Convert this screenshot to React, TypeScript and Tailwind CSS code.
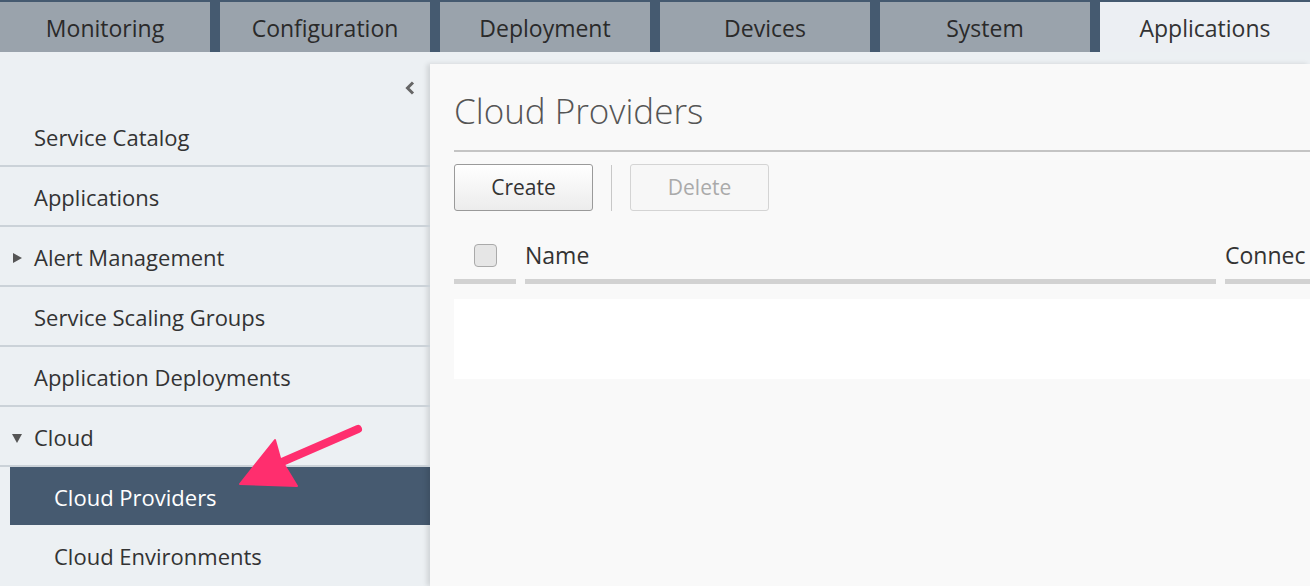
const tabs = ["Monitoring", "Configuration", "Deployment", "Devices", "System", "Applications"];

function NavRow({ label, caret, sub, active }: { label: string; caret?: "right" | "down"; sub?: boolean; active?: boolean }) {
  if (active) {
    return (
      <div className="ml-[10px] flex h-[58px] items-center bg-[#465a70] pl-[44px] pt-[2px] text-[22px] text-white">
        {label}
      </div>
    );
  }
  return (
    <div
      className={`relative flex h-[60px] items-center pt-[3px] text-[22px] text-[#333] ${
        sub ? "pl-[54px]" : "border-b-2 border-[#cbd2d8] pl-[34px]"
      }`}
    >
      {caret === "right" && (
        <span className="absolute left-[13px] top-[26px] h-0 w-0 border-y-[5px] border-l-[9px] border-y-transparent border-l-[#555]" />
      )}
      {caret === "down" && (
        <span className="absolute left-[12px] top-[27px] h-0 w-0 border-x-[5px] border-t-[9px] border-x-transparent border-t-[#555]" />
      )}
      {label}
    </div>
  );
}

export default function App() {
  return (
    <div
      className="relative flex h-[586px] w-[1310px] flex-col overflow-hidden bg-[#ecf0f3]"
      style={{ fontFamily: '"Open Sans", "Noto Sans", sans-serif' }}
    >
      <div className="flex h-[52px] gap-[10px] bg-[#455a70] pt-[2px]">
        {tabs.map((t, i) => (
          <div
            key={t}
            className={`flex h-[50px] items-center justify-center pt-[2px] text-[23px] ${
              i === tabs.length - 1 ? "flex-1 bg-[#eceff3] text-[#333]" : "w-[210px] bg-[#9aa3ac] text-[#2a2a2a]"
            }`}
          >
            {t}
          </div>
        ))}
      </div>

      <div className="flex flex-1">
        <aside className="w-[430px] shrink-0">
          <div className="flex h-[55px] items-end justify-end pb-[12px] pr-[15px]">
            <svg width="10" height="14" viewBox="0 0 10 14">
              <path d="M8 1.5 L2.5 7 L8 12.5" fill="none" stroke="#666" strokeWidth="3" />
            </svg>
          </div>
          <NavRow label="Service Catalog" />
          <NavRow label="Applications" />
          <NavRow label="Alert Management" caret="right" />
          <NavRow label="Service Scaling Groups" />
          <NavRow label="Application Deployments" />
          <NavRow label="Cloud" caret="down" />
          <NavRow label="Cloud Providers" active />
          <NavRow label="Cloud Environments" sub />
        </aside>

        <main className="mt-[12px] min-w-0 flex-1 bg-[#f9f9f9] pl-[24px] shadow-[-3px_0_5px_rgba(0,0,0,0.12)]">
          <div className="border-b-2 border-[#c4c4c4] pb-[16px] pt-[24px] text-[35px] font-light leading-[46px] text-[#555]">
            Cloud Providers
          </div>
          <div className="flex items-center pt-[12px]">
            <button className="h-[47px] w-[139px] rounded-[3px] border border-[#9a9a9a] bg-gradient-to-b from-white to-[#ececec] text-[21px] text-[#333]">
              Create
            </button>
            <div className="mx-[18px] h-[46px] w-px bg-[#c8c8c8]" />
            <button className="h-[47px] w-[139px] rounded-[3px] border border-[#d4d4d4] bg-[#f7f7f7] text-[21px] text-[#aaa]">
              Delete
            </button>
          </div>
          <div className="mt-[20px] flex h-[53px] items-end">
            <div className="flex h-full w-[62px] items-center justify-center border-b-[5px] border-[#d2d2d2]">
              <span className="h-[23px] w-[23px] rounded-[4px] border border-[#aaa] bg-[#e6e6e6]" />
            </div>
            <div className="ml-[9px] flex h-full w-[691px] items-center border-b-[5px] border-[#d2d2d2] text-[23px] text-[#333]">
              Name
            </div>
            <div className="ml-[9px] flex h-full min-w-0 flex-1 items-center overflow-hidden whitespace-nowrap border-b-[5px] border-[#d2d2d2] text-[23px] text-[#333]">
              Connec
            </div>
          </div>
          <div className="mt-[15px] h-[80px] bg-white" />
        </main>
      </div>

      <svg className="pointer-events-none absolute left-0 top-0" width="1310" height="586">
        <line x1="358" y1="429" x2="282" y2="462" stroke="#ff2e6e" strokeWidth="8" strokeLinecap="round" />
        <polygon points="240,484 275,440 280,458 297,486" fill="#ff2e6e" strokeLinejoin="round" stroke="#ff2e6e" strokeWidth="2" />
      </svg>
    </div>
  );
}
